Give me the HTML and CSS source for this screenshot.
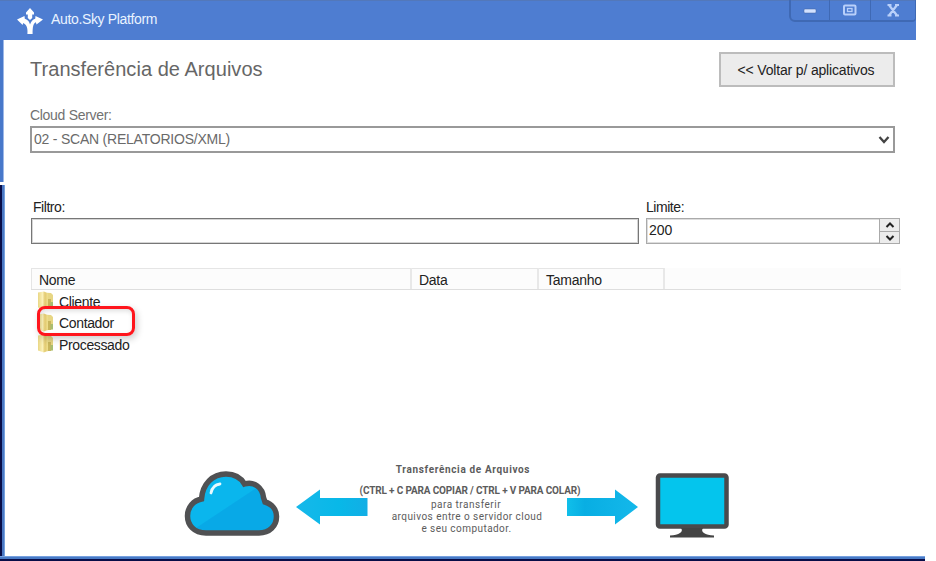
FILE: index.html
```html
<!DOCTYPE html>
<html lang="pt-BR">
<head>
<meta charset="utf-8">
<title>Auto.Sky Platform</title>
<link rel="stylesheet" href="styles.css">
</head>
<body>
<div class="window">
  <header class="titlebar">
    <svg class="logo" width="26" height="28" viewBox="0 0 26 28" fill="#fff"><path d="M13 1 9 5.500V7.500h1.800V11L13 13l2.200-2V7.500H17V5.500z"/><path d="M0 12.500 7.500 9l.3 2.800c3.200 1 4.700 3.200 5.200 5.700 1-3 2.700-4.800 5.200-5.700L18.500 9l7.500 3.500-6.500 5-.6-2.200c-2.600 1.400-3.300 4.200-3.300 11.700H10.400c.6-6-.9-9.500-4.200-11l-.6 2z"/></svg>
    <span class="app-name">Auto.Sky Platform</span>
    <div class="controls">
      <span><svg width="38" height="20"><rect x="13" y="9" width="12" height="4" rx="1" fill="#d3e2ff" stroke="#40609c" stroke-width=".5"/></svg></span>
      <span><svg width="40" height="20" fill="none"><rect x="14" y="5.500" width="11.500" height="9" rx="1" stroke="#b9d0fa" stroke-width="2"/><rect x="17.500" y="8.500" width="4.500" height="3" stroke="#b9d0fa" stroke-width="1.300"/></svg></span>
      <span><svg width="44" height="20" fill="none" stroke="#b9d0fa" stroke-width="2.200"><path d="m18 5 8 10.500M26 5l-8 10.500M16.500 5h4m3.500 0h4M16.500 15.500h4m3.500 0h4"/></svg></span>
    </div>
  </header>
  <div class="body">
    <div class="edge"><i class="edge-top"></i><i class="edge-bottom"></i></div>
    <main>
      <div class="heading">
        <h1>Transferência de Arquivos</h1>
        <button class="back">&lt;&lt; Voltar p/ aplicativos</button>
      </div>
      <div class="server-label">Cloud Server:</div>
      <div class="select"><span>02 - SCAN (RELATORIOS/XML)</span><svg width="12" height="10" viewBox="0 0 12 10"><path d="m1.500 2 4.500 5 4.500-5" fill="none" stroke="#444" stroke-width="2.300"/></svg></div>
      <div class="filters">
        <div class="filter"><div class="t-filtro">Filtro:</div><div class="input"></div></div>
        <div class="limit"><div class="t-limite">Limite:</div><div class="number"><span>200</span>
          <div class="spin"><b><svg width="10" height="6"><path d="m1.500 5 3.500-3.500L8.500 5" fill="none" stroke="#222" stroke-width="2"/></svg></b><b><svg width="10" height="6"><path d="M1.500 1 5 4.500 8.500 1" fill="none" stroke="#222" stroke-width="2"/></svg></b></div></div></div>
      </div>
      <div class="thead"><span class="c-nome">Nome</span><span class="c-data">Data</span><span class="c-tam">Tamanho</span></div>
      <svg width="0" height="0" class="defs"><defs>
        <linearGradient id="fold" x2="1" y2="0"><stop stop-color="#e9d684"/><stop offset=".45" stop-color="#fbf1b8"/><stop offset=".7" stop-color="#e3ca70"/><stop offset="1" stop-color="#efe08f"/></linearGradient>
        <symbol id="folder" viewBox="0 0 18 19"><path d="M6 1.500 14 2l2 2v12l-9 2z" fill="#e7d684"/><path d="M1 1.500 7 .5l4 2v13.500l-4 2.500L1 16.500z" fill="url(#fold)"/><path d="M11 8h3v9h-3z" fill="#c9b65c"/><path d="M13.500 11H16v5.500h-2.500z" fill="#a9bd70"/></symbol>
      </defs></svg>
      <div class="rows">
        <div class="row r1"><svg width="18" height="19"><use href="#folder"/></svg><span>Cliente</span></div>
        <div class="row r2"><svg width="18" height="19"><use href="#folder"/></svg><span>Contador</span></div>
        <div class="row r3"><svg width="18" height="19"><use href="#folder"/></svg><span>Processado</span></div>
        <div class="marker"></div>
      </div>
      <div class="banner">
        <svg class="cloud" width="96" height="70" viewBox="0 0 96 70"><defs><linearGradient id="sky" x1="0" y1="0" x2="1" y2="1"><stop offset=".5" stop-color="#0ab6ed"/><stop offset=".51" stop-color="#08a9e7"/></linearGradient></defs><path d="M22 64C10 64 3.500 56 3.500 47c0-9 6-15.500 14-17C18.500 15 28.500 5 42 5c8.500 0 15 4 18.500 10 9.500-3 18 3.500 19 13.500l1.500 4.500c7 2 11.500 7.500 11.500 14.500 0 9.500-7 16.500-17.500 16.500z" fill="url(#sky)" stroke="#505153" stroke-width="5.500"/><path d="M27 24c1-5 4-8.500 9-9" fill="none" stroke="#e8faff" stroke-width="2.800" stroke-linecap="round"/></svg>
        <svg class="arrow-l" width="74" height="36"><defs><linearGradient id="al"><stop stop-color="#16b8ea"/><stop offset=".6" stop-color="#08b8e8"/><stop offset="1" stop-color="#12aee5"/></linearGradient></defs><path d="M1 18 25 .5V9h47.500v18H25v8.500z" fill="url(#al)"/></svg>
        <div class="copy"><p class="p1">Transferência de Arquivos</p><p class="p2">(CTRL + C PARA COPIAR / CTRL + V PARA COLAR)</p><p class="p3">para transferir</p><p class="p4">arquivos entre o servidor cloud</p><p class="p5">e seu computador.</p></div>
        <svg class="arrow-r" width="74" height="36"><defs><linearGradient id="ar"><stop stop-color="#10bfea"/><stop offset=".25" stop-color="#08aee3"/><stop offset="1" stop-color="#14b8ea"/></linearGradient></defs><path d="M71 18 48 .5V9H0v18h48v8.500z" fill="url(#ar)"/></svg>
        <svg class="monitor" width="74" height="68"><rect x="3" y="2.500" width="68.500" height="51" rx="2" fill="#04c5ed" stroke="#4a4a4c" stroke-width="4.500"/><path d="M26 55h22c-3 4 2 7 11 7.500v2H15v-2C24 62 29 59 26 55z" fill="#444"/></svg>
      </div>
    </main>
  </div>
  <footer></footer>
</div>
</body>
</html>
```

FILE: styles.css
```css
* { box-sizing: border-box; }
body { margin: 0; background: #fff; font-family: "Liberation Sans", Arial, sans-serif; color: #222; overflow: hidden; }
.window { width: 936px; height: 561px; display: flex; flex-direction: column; white-space: nowrap; }
.titlebar { width: 916px; height: 40px; background: #4e7dd1; display: flex; padding-left: 17px; border-top: 1px solid #5378ba; flex: none; }
.logo { margin-top: 6px; }
.app-name { color: #e9f3ff; font-size: 14px; line-height: 16px; margin: 10px 0 0 8px; letter-spacing: -.35px; }
.controls { margin-left: auto; margin-top: -1px; display: flex; height: 22px; border: solid #3f69b4; border-width: 0 1px 2px 2px; border-radius: 0 0 4px 6px; }
.controls span { height: 20px; }
.controls span + span { border-left: 1px solid #3f69b4; }
.controls svg { display: block; }
.body { display: flex; height: 516px; }
.edge { width: 5px; display: flex; flex-direction: column; }
.edge-top { height: 142px; width: 4px; background: #4878ca; border-right: 1px solid #9db8e8; }
.edge-bottom { flex: 1; margin-top: 3px; width: 5px; background: #4a78c4; border-left: 2px solid #080d48; border-right: 1px solid #75a1df; }
main { width: 911px; padding-left: 25px; }
.heading { display: flex; height: 67px; }
h1 { margin: 17px 0 0; font-size: 20px; line-height: 24px; font-weight: 400; color: #666; letter-spacing: .04px; }
.back { margin: 12px 21px 0 auto; width: 176px; height: 35px; border: 2px solid #bcbcbc; background: #ececec; padding: 0 2px 0 0; font: 14px "Liberation Sans", Arial, sans-serif; letter-spacing: -.17px; color: #222; }
.server-label { font-size: 14px; line-height: 16px; height: 19px; letter-spacing: -.3px; color: #717171; }
.select { width: 865px; height: 27px; border: 2px solid #999; display: flex; align-items: center; padding: 0 3px 2px 2px; font-size: 14px; letter-spacing: -.22px; color: #6a6a6a; justify-content: space-between; }
.select svg { margin-top: 3px; }
.filters { display: flex; margin: 46px 0 0 1px; font-size: 14px; line-height: 17px; }
.t-filtro { padding-left: 2px; letter-spacing: -.45px; }
.t-limite { letter-spacing: -.45px; }
.input { width: 608px; height: 26px; margin-top: 2px; border: 1px solid #777; box-shadow: inset 0 0 0 1px #d5d5d5; }
.limit { margin-left: 7px; }
.number { margin-top: 2px; width: 254px; height: 26px; border: 1px solid #aaa; box-shadow: inset 0 0 0 1px #ddd; display: flex; justify-content: space-between; padding-left: 2px; }
.number span { line-height: 22px; }
.spin { width: 20px; border-left: 1px solid #aaa; background: #ececec; }
.spin b { height: 12px; display: flex; justify-content: center; align-items: center; }
.spin b + b { border-top: 1px solid #aaa; }
.thead { margin: 24px 0 0 1px; width: 870px; height: 22px; display: flex; font-size: 14px; line-height: 23px; border-bottom: 1px solid #dedede; background: #fcfcfc; }
.thead span { border-top: 1px solid #e5e5e5; border-right: 2px solid #e8e8e8; padding-left: 7px; }
.c-nome { width: 381px; border-left: 1px solid #e5e5e5; letter-spacing: -.3px; }
.c-data { width: 127px; letter-spacing: -.3px; }
.c-tam { width: 126px; letter-spacing: -.25px; }
.defs { display: block; }
.rows { position: relative; height: 65px; margin: 0 0 0 7px; font-size: 14px; letter-spacing: -.35px; }
.row { display: flex; height: 21.5px; align-items: center; gap: 4px; }
.row span { padding-top: 2px; }
.marker { position: absolute; left: 0; top: 16px; width: 98px; height: 30px; border: 3px solid #ff151c; border-radius: 8px; box-shadow: 2px 3px 7px #0003, inset 1px 2px 5px #0002; }
.banner { display: flex; margin: 114px 0 0 154px; height: 86px; }
.arrow-l { margin: 20px 0 0 15px; }
.copy { width: 222px; margin-left: -10px; display: flex; flex-direction: column; align-items: center; font-family: Roboto, sans-serif; color: #5c5c5c; font-size: 10px; line-height: 12px; }
.copy p { margin: 0; }
.copy .p1 { margin: -5px 14px 0 0; font-weight: 700; letter-spacing: .65px; }
.copy .p2 { margin: 9px 0 2px; font-weight: 700; letter-spacing: -.15px; }
.copy .p3 { margin-right: 8px; letter-spacing: .5px; }
.copy .p4 { margin-right: 6px; letter-spacing: .45px; }
.copy .p5 { margin-right: 7px; letter-spacing: .45px; }
.arrow-r { margin: 20px 0 0 -14px; }
.monitor { margin: 4px 0 0 14px; }
footer { width: 925px; height: 5px; background: #487ac6; border-bottom: 2px solid #080d48; border-top: 1px solid #76a0df; }
```
